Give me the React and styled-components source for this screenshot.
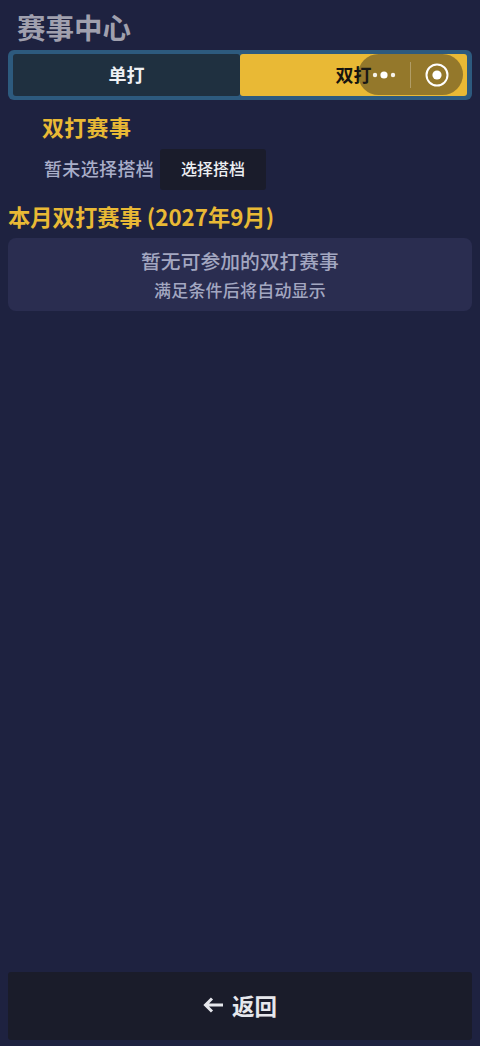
import React from 'react';
import styled, { createGlobalStyle } from 'styled-components';

const Global = createGlobalStyle`
  html, body { margin: 0; padding: 0; background: #1e2240; }
  body { font-family: "Noto Sans CJK SC", "Noto Sans", sans-serif; }
`;

const Page = styled.div`
  position: relative;
  width: 480px;
  height: 1046px;
  display: flex;
  flex-direction: column;
  padding: 0 8px 6px;
  box-sizing: border-box;
  overflow: hidden;
  background: #1e2240;
`;

const Title = styled.h1`
  margin: 0;
  height: 50px;
  padding-left: 9px;
  font-size: 28.5px;
  line-height: 54px;
  font-weight: 700;
  color: #a0a0ae;
`;

const Tabs = styled.div`
  display: flex;
  height: 50px;
  box-sizing: border-box;
  padding: 4px 5px;
  border-radius: 6px;
  background: #2d5a7e;
`;

const Tab = styled.div`
  flex: 1;
  display: flex;
  align-items: center;
  justify-content: center;
  padding-bottom: 3px;
  font-size: 18px;
  font-weight: 700;
  border-radius: 3px;
  color: ${p => (p.$active ? '#15130f' : '#eef0f4')};
  background: ${p => (p.$active ? '#e9b935' : '#1f3040')};
`;

const Capsule = styled.div`
  position: absolute;
  top: 54px;
  left: 358px;
  width: 105px;
  height: 41px;
  display: flex;
  align-items: center;
  border-radius: 21px;
  background: rgba(30, 30, 30, 0.42);
`;

const Dots = styled.div`
  width: 52px;
  display: flex;
  justify-content: center;
  flex-shrink: 0;
`;

const Divider = styled.div`
  width: 1px;
  height: 26px;
  background: rgba(255, 255, 255, 0.28);
`;

const Target = styled.div`
  flex: 1;
  display: flex;
  justify-content: center;
`;

const Section = styled.div`
  padding: 10px 0 0 34px;
`;

const SectionTitle = styled.h2`
  margin: 0;
  font-size: 22px;
  line-height: 32px;
  letter-spacing: 0.3px;
  font-weight: 700;
  color: #e9b935;
`;

const PartnerRow = styled.div`
  display: flex;
  align-items: center;
  gap: 6px;
  margin-top: 7px;
  padding-left: 2px;
`;

const Muted = styled.span`
  padding-bottom: 4px;
  font-size: 18px;
  line-height: 36px;
  letter-spacing: 0.35px;
  font-weight: 500;
  color: #a9aec9;
`;

const PickButton = styled.button`
  width: 106px;
  height: 41px;
  border: 0;
  padding: 0 0 4px;
  border-radius: 3px;
  font: 500 16px "Noto Sans CJK SC", sans-serif;
  color: #eceef2;
  background: #1a1c2b;
`;

const MonthTitle = styled.h2`
  margin: 10px 0 0;
  font-size: 22.3px;
  line-height: 32px;
  font-weight: 700;
  color: #e9b935;
`;

const EmptyCard = styled.div`
  margin-top: 6px;
  height: 73px;
  box-sizing: border-box;
  padding-top: 7px;
  border-radius: 8px;
  background: #2a2d50;
  text-align: center;
`;

const EmptyMain = styled.div`
  font-size: 19.8px;
  line-height: 32px;
  font-weight: 500;
  color: #a3a7c1;
`;

const EmptySub = styled.div`
  font-size: 17px;
  line-height: 25px;
  letter-spacing: 0.2px;
  font-weight: 500;
  color: #a3a7c1;
`;

const BackButton = styled.button`
  margin-top: auto;
  height: 68px;
  border: 0;
  padding: 0 0 2px;
  border-radius: 3px;
  display: flex;
  align-items: center;
  justify-content: center;
  gap: 9px;
  font: 700 22.5px "Noto Sans CJK SC", sans-serif;
  color: #e6e7ec;
  background: #1a1c2a;
`;

export default function App() {
  return (
    <Page>
      <Global />
      <Title>赛事中心</Title>
      <Tabs>
        <Tab>单打</Tab>
        <Tab $active>双打</Tab>
      </Tabs>
      <Capsule>
        <Dots>
          <svg width="24" height="10" viewBox="0 0 24 10">
            <circle cx="3" cy="5" r="2.2" fill="#fff" opacity="0.9" />
            <circle cx="12" cy="5" r="3.6" fill="#fff" />
            <circle cx="21" cy="5" r="2.2" fill="#fff" opacity="0.9" />
          </svg>
        </Dots>
        <Divider />
        <Target>
          <svg width="26" height="26" viewBox="0 0 26 26">
            <circle cx="13" cy="13" r="10.5" fill="none" stroke="#fff" strokeWidth="2" />
            <circle cx="13" cy="13" r="4.6" fill="#fff" />
          </svg>
        </Target>
      </Capsule>
      <Section>
        <SectionTitle>双打赛事</SectionTitle>
        <PartnerRow>
          <Muted>暂未选择搭档</Muted>
          <PickButton>选择搭档</PickButton>
        </PartnerRow>
      </Section>
      <MonthTitle>本月双打赛事 (2027年9月)</MonthTitle>
      <EmptyCard>
        <EmptyMain>暂无可参加的双打赛事</EmptyMain>
        <EmptySub>满足条件后将自动显示</EmptySub>
      </EmptyCard>
      <BackButton>
        <svg width="20" height="16" viewBox="0 0 20 16">
          <path d="M20 8H2.5M9 1.5L2.5 8L9 14.5" fill="none" stroke="#e6e7ec" strokeWidth="3" />
        </svg>
        返回
      </BackButton>
    </Page>
  );
}
